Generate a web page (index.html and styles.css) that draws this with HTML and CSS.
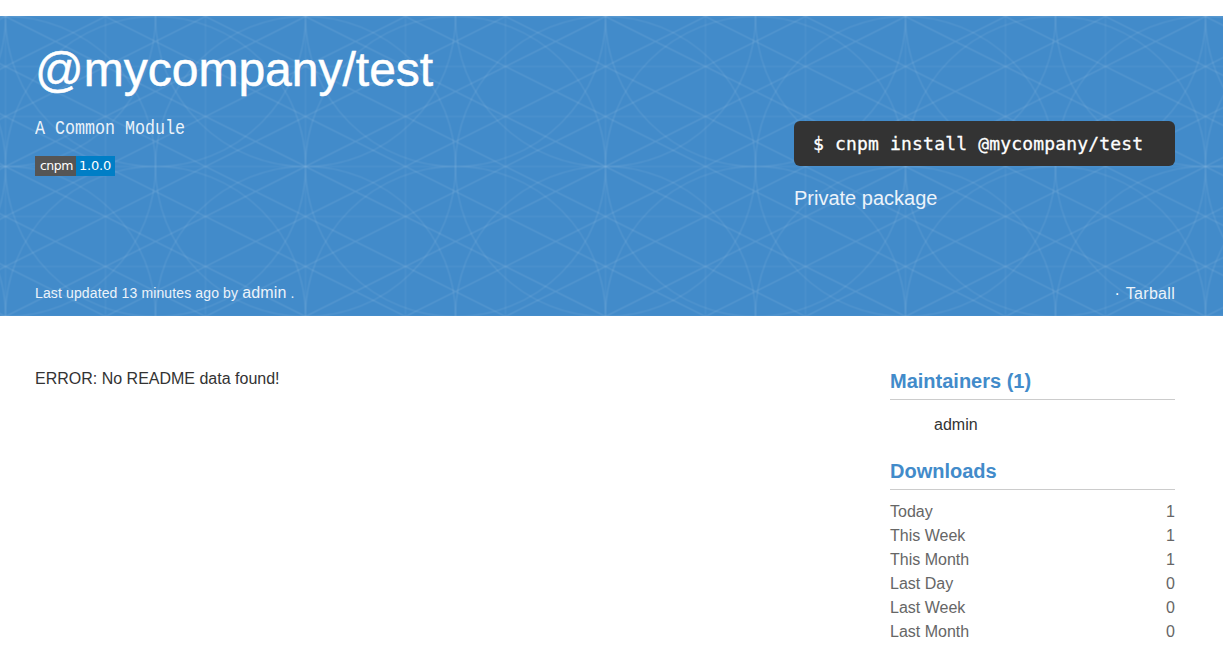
FILE: index.html
```
<!DOCTYPE html>
<html lang="en">
<head>
<meta charset="utf-8">
<title>@mycompany/test</title>
<link rel="stylesheet" href="styles.css">
</head>
<body>
<header class="hero">
  <svg class="pattern" width="1223" height="300" aria-hidden="true">
    <defs>
      <pattern id="weave" x="5.5" y="0.5" width="300" height="150" patternUnits="userSpaceOnUse">
        <g class="weave-lines">
          <path class="grid" d="M0 0V150M100 0V150M200 0V150M300 0V150M0 0H300M0 50H300M0 100H300M0 150H300"/>
          <path d="M200 0L300 50M100 0L300 100M0 0L300 150M0 50L200 150M0 100L100 150M100 0L0 50M200 0L0 100M300 0L0 150M300 50L100 150M300 100L200 150"/>
          <circle cx="0" cy="0" r="150"/><circle cx="150" cy="0" r="150"/><circle cx="300" cy="0" r="150"/>
          <circle cx="0" cy="150" r="150"/><circle cx="150" cy="150" r="150"/><circle cx="300" cy="150" r="150"/>
        </g>
      </pattern>
    </defs>
    <rect width="1223" height="300" fill="url(#weave)"/>
  </svg>
  <div class="hero-body">
    <div class="summary">
      <h1 class="title">@mycompany/test</h1>
      <p class="description">A Common Module</p>
      <div class="badge"><span class="badge-name">cnpm</span><span class="badge-version">1.0.0</span></div>
    </div>
    <div class="install">
      <code class="command">$ cnpm install @mycompany/test</code>
      <p class="private">Private package</p>
    </div>
  </div>
  <div class="hero-footer">
    <div class="updated">Last updated 13 minutes ago by <a class="link">admin</a> .</div>
    <div class="links"><span class="dot">·</span><a class="link">Tarball</a></div>
  </div>
</header>
<main class="content">
  <article class="readme">ERROR: No README data found!</article>
  <aside class="sidebar">
    <h2 class="heading">Maintainers (1)</h2>
    <div class="maintainer">admin</div>
    <h2 class="heading">Downloads</h2>
    <dl class="stats">
      <div class="stat"><dt>Today</dt><dd>1</dd></div>
      <div class="stat"><dt>This Week</dt><dd>1</dd></div>
      <div class="stat"><dt>This Month</dt><dd>1</dd></div>
      <div class="stat"><dt>Last Day</dt><dd>0</dd></div>
      <div class="stat"><dt>Last Week</dt><dd>0</dd></div>
      <div class="stat"><dt>Last Month</dt><dd>0</dd></div>
    </dl>
  </aside>
</main>
</body>
</html>
```

FILE: styles.css
```
* { box-sizing: border-box; }
body {
  margin: 0;
  padding-top: 16px;
  height: 648px;
  overflow: hidden;
  background: #fff;
  color: #333;
  font: 16px/24px "Liberation Sans", Arial, sans-serif;
}
h1, h2, p, dl, dd { margin: 0; }
.hero {
  position: relative;
  display: flex;
  flex-direction: column;
  justify-content: space-between;
  height: 300px;
  padding: 24px 48px 11px 35px;
  background: #428bca;
  color: #fff;
}
.pattern { position: absolute; top: 0; left: 0; }
.weave-lines { fill: none; stroke: #fff; stroke-opacity: .1; stroke-width: 1.2; }
.weave-lines circle { stroke-opacity: .085; }
.grid { stroke-opacity: .07; stroke-width: 1; }
.hero-body, .hero-footer { position: relative; display: flex; justify-content: space-between; }
.title { font-size: 48px; line-height: 60px; font-weight: 400; -webkit-text-stroke: .5px #fff; }
.description {
  margin: 17px 0 15px;
  font: 16.66px/24px "Liberation Mono", "Courier New", monospace;
  transform: scaleY(1.17);
  color: #ecf3fa;
}
.badge {
  display: flex;
  width: 80px;
  font: 13px/20px "DejaVu Sans", Verdana, sans-serif;
}
.badge-name { width: 41px; padding-left: 5px; background: #555; font-size: 12.5px; letter-spacing: -.5px; }
.badge-version { flex: 1; padding-left: 3px; background: #007ec6; letter-spacing: -.2px; }
.install { width: 381px; padding-top: 81px; }
.command {
  display: block;
  height: 45px;
  padding-left: 19px;
  border-radius: 6px;
  background: #333;
  font: 18px/45px "DejaVu Sans Mono", monospace;
  letter-spacing: .175px;
  -webkit-text-stroke: .3px #fff;
}
.private { margin-top: 20px; font-size: 20px; color: #ecf3fa; }
.updated { font-size: 14px; letter-spacing: .13px; color: #ecf3fa; }
.link { font-size: 16px; color: #ecf3fa; }
.links { padding-top: 1px; margin-bottom: -1px; }
.links .link { letter-spacing: .3px; }
.dot { margin-right: 6px; }
.content { display: flex; justify-content: space-between; padding: 50px 48px 0 35px; }
.readme { padding-top: 1px; }
.sidebar { width: 285px; }
.heading {
  height: 34px;
  border-bottom: 1px solid #ccc;
  color: #428bca;
  font-size: 20px;
  line-height: 30px;
}
.maintainer { height: 56px; padding: 13px 0 0 44px; }
.stats { padding-top: 10px; color: #666; }
.stat { display: flex; justify-content: space-between; }
```
